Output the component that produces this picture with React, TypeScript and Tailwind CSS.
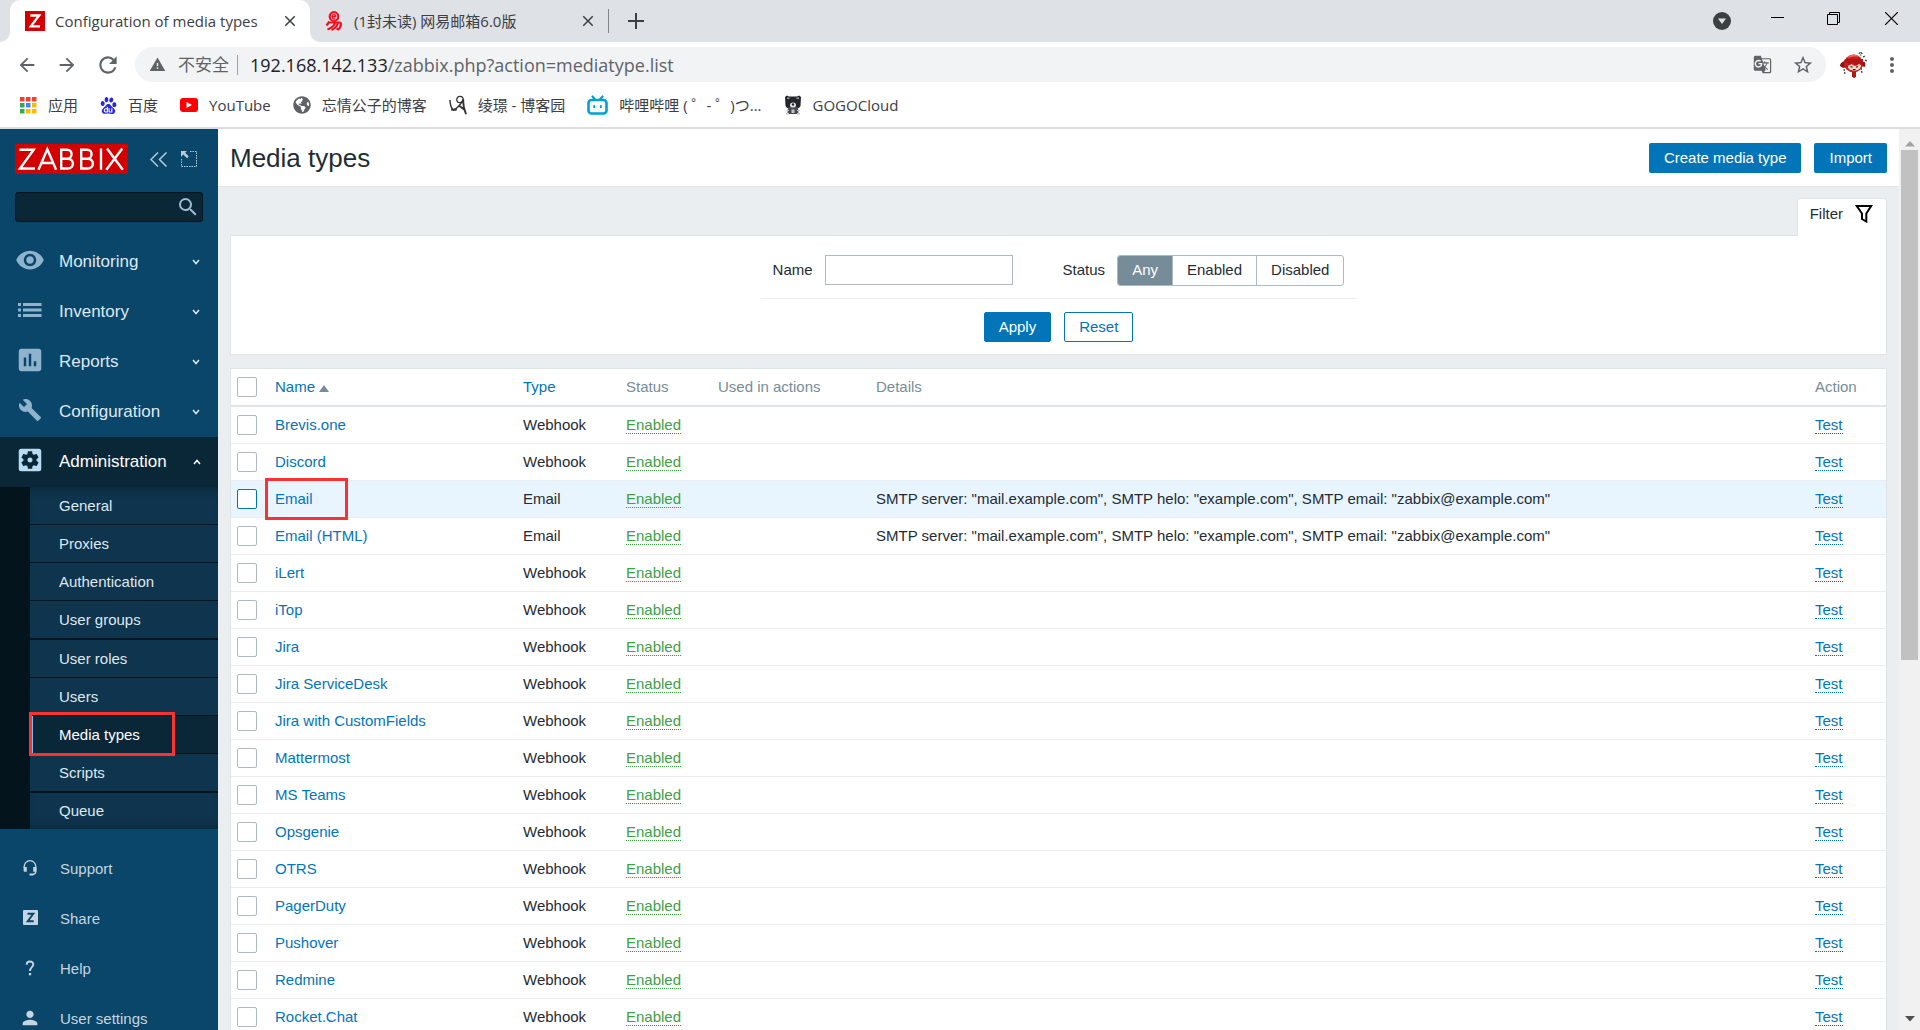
import { useState } from "react";
import type { ReactNode } from "react";
import {
  MdArrowBack,
  MdArrowForward,
  MdAssessment,
  MdBuild,
  MdClose,
  MdGTranslate,
  MdMoreVert,
  MdPerson,
  MdRefresh,
  MdSearch,
  MdSettingsApplications,
  MdStarBorder,
  MdVisibility,
  MdWarning,
} from "react-icons/md";
import { FaGlobeAmericas } from "react-icons/fa";
import { SiBaidu } from "react-icons/si";

const uiFont = "font-['Open_Sans','Noto_Sans_CJK_SC',sans-serif]";
const pageFont = "font-['Liberation_Sans',Arial,sans-serif]";

const smtp =
  'SMTP server: "mail.example.com", SMTP helo: "example.com", SMTP email: "zabbix@example.com"';

const mediaTypes = [
  { name: "Brevis.one", type: "Webhook", details: "" },
  { name: "Discord", type: "Webhook", details: "" },
  { name: "Email", type: "Email", details: smtp, marked: true },
  { name: "Email (HTML)", type: "Email", details: smtp },
  { name: "iLert", type: "Webhook", details: "" },
  { name: "iTop", type: "Webhook", details: "" },
  { name: "Jira", type: "Webhook", details: "" },
  { name: "Jira ServiceDesk", type: "Webhook", details: "" },
  { name: "Jira with CustomFields", type: "Webhook", details: "" },
  { name: "Mattermost", type: "Webhook", details: "" },
  { name: "MS Teams", type: "Webhook", details: "" },
  { name: "Opsgenie", type: "Webhook", details: "" },
  { name: "OTRS", type: "Webhook", details: "" },
  { name: "PagerDuty", type: "Webhook", details: "" },
  { name: "Pushover", type: "Webhook", details: "" },
  { name: "Redmine", type: "Webhook", details: "" },
  { name: "Rocket.Chat", type: "Webhook", details: "" },
];

const menu = [
  { label: "Monitoring", icon: <MdVisibility className="size-[30px]" /> },
  { label: "Inventory", icon: <InventoryIcon /> },
  { label: "Reports", icon: <MdAssessment className="size-[30px]" /> },
  { label: "Configuration", icon: <MdBuild className="size-6" /> },
];

const submenu = [
  "General",
  "Proxies",
  "Authentication",
  "User groups",
  "User roles",
  "Users",
  "Media types",
  "Scripts",
  "Queue",
];

const userMenu = [
  { label: "Support", icon: <HeadsetIcon /> },
  { label: "Share", icon: <ShareIcon /> },
  { label: "Help", icon: <HelpIcon /> },
  { label: "User settings", icon: <MdPerson className="size-[22px]" /> },
];

/* ---------- icons ---------- */

function InventoryIcon() {
  return (
    <svg viewBox="0 0 24 14" className="h-[14px] w-6" fill="currentColor">
      <path d="M0 0h3v3H0zM0 5.500h3v3H0zM0 11h3v3H0zM5 0h18.500v3H5zM5 5.500h18.500v3H5zM5 11h18.500v3H5z" />
    </svg>
  );
}

function HeadsetIcon() {
  return (
    <svg viewBox="0 0 14 16" className="h-4 w-[14px]" fill="none" stroke="currentColor" strokeWidth="1.300">
      <path d="M1.200 8V6.500a5.800 5.800 0 0 1 11.600 0v4.500c0 2-1 3.300-3 3.500" />
      <path d="M.6 7h3.200v4.800H2a1.400 1.400 0 0 1-1.400-1.400zM10.200 7h3.200v4.800h-3.200zM6.500 13.500h3.500v2H6.500z" fill="currentColor" stroke="none" />
    </svg>
  );
}

function ShareIcon() {
  return (
    <svg viewBox="0 0 15 15" className="size-[15px]">
      <rect width="15" height="15" rx="1" fill="currentColor" />
      <path d="M4.500 3.800h5.800L4.700 11.200h6" fill="none" stroke="#0a466a" strokeWidth="1.900" />
    </svg>
  );
}

function HelpIcon() {
  return (
    <svg viewBox="0 0 10 16" className="h-4 w-[10px]" fill="none" stroke="currentColor" strokeWidth="1.900">
      <path d="M1.700 4.800C1.700 0.400 8.300 0.400 8.300 4.600C8.300 7.200 5 7.300 5 11" />
      <path d="M5 13v2.300" strokeWidth="2.300" />
    </svg>
  );
}

function ZabbixFavicon() {
  return (
    <svg viewBox="0 0 20 20" className="size-5 shrink-0">
      <rect width="20" height="20" fill="#d40000" />
      <path d="M5.300 4.500h8.900L5.800 15.300h9.200" fill="none" stroke="#fff" strokeWidth="2.300" />
    </svg>
  );
}

function ZabbixLogo() {
  return (
    <svg viewBox="0 0 113 30" className="h-[30px] w-[113px]" role="img" aria-label="Zabbix">
      <rect width="113" height="30" fill="#d40000" />
      <g fill="none" stroke="#fff" strokeWidth="2.400">
        <path d="M4.500 5.700h14.200L5 24.500h15" />
        <path d="M23.500 25.700L32.300 5.300l8.800 20.400M26.700 19h11.200" />
        <path d="M46.200 5.700v18.800h6.600c6.800 0 6.800-9.800 0-9.800h-6.600h6c5.800 0 5.800-9 0-9z" />
        <path d="M66.200 5.700v18.800h6.600c6.800 0 6.800-9.800 0-9.800h-6.600h6c5.800 0 5.800-9 0-9z" />
        <path d="M86 4.500v21.200" />
        <path d="M92 4.500l15.800 21.200M107.300 4.500L91.300 25.700" />
      </g>
    </svg>
  );
}

function MailFavicon() {
  return (
    <svg viewBox="0 0 18 20" className="h-5 w-[18px] shrink-0" fill="none" stroke="#f0101c" strokeWidth="2.200">
      <circle cx="9" cy="5.500" r="4.300" />
      <path d="M7 5.500h4M11 5.500a2 2 0 1 0-1 1.800" strokeWidth="1.300" />
      <path d="M4.500 10.500L1.500 14.500M3.500 11.500H15c1.500 0 1 5-1.500 7l-2-1M10 12c-1 3-4 5-7.500 6.500M13 12c-1 3-3 5.500-6.500 7" />
    </svg>
  );
}

function AppsIcon() {
  const colors = ["#ea4335", "#ea4335", "#ea4335", "#34a853", "#4285f4", "#fbbc05", "#34a853", "#fbbc05", "#fbbc05"];
  return (
    <svg viewBox="0 0 17 17" className="size-[17px]">
      {colors.map((c, i) => (
        <rect key={i} x={(i % 3) * 6} y={Math.floor(i / 3) * 6} width="4.500" height="4.500" fill={c} />
      ))}
    </svg>
  );
}

function YouTubeIcon() {
  return (
    <svg viewBox="0 0 18 18" className="size-[18px]">
      <rect y="2" width="18" height="14" rx="3" fill="#f00" />
      <path d="M6.500 6v6l5.500-3z" fill="#fff" />
    </svg>
  );
}

function BlogIcon() {
  return (
    <svg viewBox="0 0 18 20" className="h-5 w-[18px]" fill="none" stroke="#333" strokeLinecap="round">
      <circle cx="11" cy="4.500" r="3.200" strokeWidth="1.300" />
      <path d="M1 5.500c.3 4 1.300 8 3.200 9.300c3.300-.8 7-4.800 10-10" strokeWidth="1.500" />
      <path d="M14.300 5c-.3 4.500.6 9 2.500 13.500M10.500 11l4.700 3.500M3 14.800h4" strokeWidth="1.900" />
    </svg>
  );
}

function BilibiliIcon() {
  return (
    <svg viewBox="0 0 21 20" className="h-5 w-[21px]" fill="none" stroke="#00a1d6" strokeWidth="2.600" strokeLinecap="round">
      <rect x="1.500" y="5" width="18" height="13.500" rx="3" />
      <path d="M5.500 1.500L8 4.500M15.500 1.500L13 4.500" strokeWidth="2.200" />
      <path d="M7.200 11v1.300M13.800 11v1.300" strokeWidth="2" />
    </svg>
  );
}

function BearIcon() {
  return (
    <svg viewBox="0 0 18 20" className="h-5 w-[18px]">
      <path d="M1 2l2-1.500 2 1h8l2-1L17 2l-.5 9-1.500 2H3l-1.500-2z" fill="#25252d" />
      <path d="M4 12h10l.5 7h-11z" fill="#4a4a52" />
      <path d="M3 2.500h2.500v1.500H3zM12.500 2.500H15v1.500h-2.500z" fill="#9a9aa2" />
      <ellipse cx="9" cy="10" rx="3" ry="2.500" fill="#e8e8ec" />
      <circle cx="9" cy="9.500" r="1.200" fill="#222" />
      <path d="M2 15h3v1H2zM13 15h3v1h-3zM7.500 14.500h3v3.500h-3zM2 18h3v1.500H2zM13 18h3v1.500h-3z" fill="#c4c4ca" />
    </svg>
  );
}

function AvatarIcon() {
  return (
    <svg viewBox="0 0 28 28" className="size-7">
      <path d="M0 15c0-3 3-5 6-5l1 6-4 1zM22 11c3-1 4 1 3 5l-4-1z" fill="#8d1414" />
      <ellipse cx="13.500" cy="12.500" rx="9.500" ry="9" fill="#c81e1e" />
      <path d="M7 7c3-4 9-5 12-1-4-1-8 0-12 1z" fill="#f26d5d" />
      <path d="M8 15l3-2 4 2 3-2 3 1c0 4-3 5.500-6.500 5.500S8 19 8 15z" fill="#f6d7bd" />
      <path d="M4 10l6 4 3-3 3 4 4-3 3 3V8H5z" fill="#b01818" />
      <path d="M10.500 15.500l2 .800M18 15.500l-2 .8M13 18.500h2.500" stroke="#3a1010" strokeWidth="1.200" />
      <path d="M12 21h4v5l-2 1-2-1z" fill="#b01818" />
      <path d="M4 18l1 5M21 17l1 5M19 3l1.500-2 1.500 1.500-1.500 2M23 6l2-1M25 9l2 1" fill="none" stroke="#333" strokeWidth="1.200" strokeDasharray="2 1" />
    </svg>
  );
}

function FunnelIcon() {
  return (
    <svg viewBox="0 0 18 18" className="size-[18px]" fill="none" stroke="#000" strokeWidth="2">
      <path d="M1.800 1h14.400L11.300 8.500v8L7 14V8.500z" />
    </svg>
  );
}

function Caret({ up = false }: { up?: boolean }) {
  return (
    <svg viewBox="0 0 8 6" className="h-[6px] w-2" fill="none" stroke="currentColor" strokeWidth="1.500">
      <path d={up ? "M1 5l3-3.500L7 5" : "M1 1l3 3.500L7 1"} />
    </svg>
  );
}

/* ---------- browser window ---------- */

function TabStrip() {
  return (
    <div className="flex h-[42px] items-stretch bg-[#dee1e6] text-[15px] text-[#3c4043]">
      <div className="w-[10px] bg-white">
        <div className="h-full rounded-br-[10px] bg-[#dee1e6]" />
      </div>
      <div className="flex w-[300px] items-center rounded-t-[10px] bg-white pl-[15px] pr-[11px]">
        <ZabbixFavicon />
        <span className="ml-[10px] flex-1 whitespace-nowrap">Configuration of media types</span>
        <button aria-label="Close tab">
          <MdClose className="size-[18px]" />
        </button>
      </div>
      <div className="w-[10px] bg-white">
        <div className="h-full rounded-bl-[10px] bg-[#dee1e6]" />
      </div>
      <div className="flex w-[288px] items-center pl-[5px] pr-[11px]">
        <MailFavicon />
        <span className="ml-[11px] flex-1 whitespace-nowrap">(1封未读) 网易邮箱6.0版</span>
        <button aria-label="Close tab">
          <MdClose className="size-[18px]" />
        </button>
      </div>
      <div className="h-6 w-px self-center bg-[#80868b]" />
      <button aria-label="New tab" className="ml-[19px]">
        <svg viewBox="0 0 16 16" className="size-4" stroke="#3c4043" strokeWidth="2">
          <path d="M8 0v16M0 8h16" />
        </svg>
      </button>

      {/* window controls */}
      <div className="ml-auto flex items-start text-black">
        <button aria-label="Search tabs" className="mr-10 mt-3">
          <svg viewBox="0 0 18 18" className="size-[18px]">
            <circle cx="9" cy="9" r="9" fill="#3c4043" />
            <path d="M5 6.500h8L9 12z" fill="#dee1e6" />
          </svg>
        </button>
        <button aria-label="Minimize" className="mr-[43px] mt-3">
          <svg viewBox="0 0 13 13" className="size-[13px]" shapeRendering="crispEdges">
            <path d="M0 5h13v1H0z" />
          </svg>
        </button>
        <button aria-label="Restore" className="mr-[45px] mt-3">
          <svg viewBox="0 0 13 13" className="size-[13px]" fill="none" stroke="#000">
            <path d="M.5 2.500h10v10H.5zM2.500 2.500v-2h10v10h-2" />
          </svg>
        </button>
        <button aria-label="Close" className="mr-[22px] mt-3">
          <svg viewBox="0 0 13 13" className="size-[13px]" stroke="#000" strokeWidth="1.200">
            <path d="M0 0l13 13M13 0L0 13" />
          </svg>
        </button>
      </div>
    </div>
  );
}

function AddressBar() {
  return (
    <div className="flex h-[45px] items-center pl-4 pr-4 text-[#5f6368]">
      <button aria-label="Back">
        <MdArrowBack className="size-[22px]" />
      </button>
      <button aria-label="Forward" className="ml-[18px]">
        <MdArrowForward className="size-[22px]" />
      </button>
      <button aria-label="Reload" className="ml-[17px]">
        <MdRefresh className="size-[26px]" />
      </button>
      <div className="ml-[14px] flex h-[35px] min-w-0 flex-1 items-center rounded-full bg-[#f1f3f4] pl-[14px] pr-3">
        <MdWarning className="size-[17px]" />
        <span className="ml-3 whitespace-nowrap text-[17px]">不安全</span>
        <span className="mx-2 h-5 w-px bg-[#9aa0a6]" />
        <span className="ml-1 flex-1 whitespace-nowrap text-lg leading-6">
          <span className="text-[#202124]">192.168.142.133</span>/zabbix.php?action=mediatype.list
        </span>
        <button aria-label="Translate this page">
          <MdGTranslate className="size-[19px]" />
        </button>
        <button aria-label="Bookmark this page" className="ml-5">
          <MdStarBorder className="size-[22px]" />
        </button>
      </div>
      <button aria-label="Profile" className="ml-[14px]">
        <AvatarIcon />
      </button>
      <button aria-label="Menu" className="ml-3">
        <MdMoreVert className="size-6" />
      </button>
    </div>
  );
}

function Bookmark({ icon, label }: { icon: ReactNode; label: string }) {
  return (
    <a href="#" className="flex shrink-0 items-center gap-[11px] whitespace-nowrap">
      {icon}
      {label}
    </a>
  );
}

function BookmarksBar() {
  return (
    <nav className="flex h-[42px] items-center gap-[22px] border-b-2 border-[#dadce0] pb-1 pl-5 text-[15px] text-[#3c4043]">
      <Bookmark icon={<AppsIcon />} label="应用" />
      <Bookmark icon={<SiBaidu className="size-[17px] text-[#2529d8]" />} label="百度" />
      <Bookmark icon={<YouTubeIcon />} label="YouTube" />
      <Bookmark icon={<FaGlobeAmericas className="size-[18px] text-[#5f6368]" />} label="忘情公子的博客" />
      <Bookmark icon={<BlogIcon />} label="绫璟 - 博客园" />
      <Bookmark icon={<BilibiliIcon />} label="哔哩哔哩 ( ゜- ゜)つ..." />
      <Bookmark icon={<BearIcon />} label="GOGOCloud" />
    </nav>
  );
}

function Scrollbar() {
  return (
    <div className="flex w-[21px] shrink-0 flex-col items-center justify-between bg-[#f1f1f1] py-2">
      <div className="flex h-full flex-col items-center">
        <svg viewBox="0 0 10 6" className="h-[13px] w-[10px] shrink-0" fill="#a3a3a3">
          <path d="M0 6l5-5.500L10 6z" />
        </svg>
        <div className="h-[58%] w-[17px] bg-[#c1c1c1]" />
      </div>
      <svg viewBox="0 0 10 6" className="h-[6px] w-[10px] shrink-0" fill="#505050">
        <path d="M0 0l5 5.500L10 0z" />
      </svg>
    </div>
  );
}

/* ---------- sidebar ---------- */

function Sidebar() {
  return (
    <aside className="flex w-[218px] shrink-0 flex-col overflow-hidden bg-[#0a466a] text-[#dfe8ee]">
      <div className="flex items-center pl-[15px] pt-[15px]">
        <a href="#">
          <ZabbixLogo />
        </a>
        <button aria-label="Collapse sidebar" className="ml-[22px] text-[#b5cbd9]">
          <svg viewBox="0 0 18 15" className="h-[15px] w-[18px]" fill="none" stroke="currentColor" strokeWidth="1.500">
            <path d="M8 .500L1 7.500l7 7M16.500.500l-7 7 7 7" />
          </svg>
        </button>
        <button aria-label="Hide sidebar" className="ml-[13px] text-[#b5cbd9]">
          <svg viewBox="0 0 16 16" className="size-4" fill="none" stroke="currentColor">
            <path d="M9 .500h6.500v15H.500V8" strokeDasharray="1.500 1" />
            <path d="M0 0h6L4.200 1.800l3.600 3.600-1.800 1.800L2.200 3.600 0 6z" fill="currentColor" stroke="none" />
          </svg>
        </button>
      </div>

      <div className="mx-[15px] mt-[18px] flex h-[30px] shrink-0 items-center rounded-[3px] border border-[#04141d] bg-[#0a2738] pr-[2px]">
        <input aria-label="Search" className="min-w-0 flex-1 bg-transparent px-2 text-[15px] outline-none" />
        <button aria-label="Run search" className="text-[#9fbccf]">
          <MdSearch className="size-6" />
        </button>
      </div>

      <nav className="mt-[15px] text-[17px]">
        {menu.map((item) => (
          <a key={item.label} href="#" className="flex h-[50px] items-center pr-[18px]">
            <span className="flex w-[59px] justify-center pb-1 text-[#8fb3cc]">{item.icon}</span>
            <span className="flex-1">{item.label}</span>
            <Caret />
          </a>
        ))}
        <a href="#" className="flex h-[50px] items-center bg-[#0a2738] pr-[17px] text-white">
          <span className="flex w-[59px] justify-center pb-1 text-[#b8dbf2]">
            <MdSettingsApplications className="size-[30px]" />
          </span>
          <span className="flex-1">Administration</span>
          <Caret up />
        </a>

        <ul className="bg-[#04141d] pl-[30px] text-[15px]">
          {submenu.map((label, i) => (
            <li
              key={label}
              className={
                label === "Media types"
                  ? "relative h-[38px] border-b border-l-[3px] border-b-[#04141d] border-l-[#7dbbe8] bg-[#0a2738]"
                  : i === 3 || i === 7
                    ? "h-[39px] border-b-2 border-[#04141d] bg-[#0f344d]"
                    : i === 8
                      ? "h-9 bg-[#0f344d] shadow-[inset_0_-8px_8px_-6px_#0a2738]"
                      : i === 0
                        ? "h-[38px] border-b border-[#04141d] bg-[#0f344d] shadow-[inset_0_8px_8px_-6px_#0a2738]"
                        : "h-[38px] border-b border-[#04141d] bg-[#0f344d]"
              }
            >
              <a
                href="#"
                className={`flex h-full items-center ${label === "Media types" ? "pl-[26px] text-white" : "pl-[29px]"}`}
              >
                {label}
              </a>
              {label === "Media types" && (
                <span className="pointer-events-none absolute -left-1 -top-1 h-11 w-[146px] border-[3px] border-[#fb3232]" />
              )}
            </li>
          ))}
        </ul>
      </nav>

      <nav className="mt-[15px] text-[15px] text-[#c6d5df]">
        {userMenu.map((item) => (
          <a key={item.label} href="#" className="flex h-[50px] items-center">
            <span className="flex w-[60px] justify-center pb-[3px]">{item.icon}</span>
            {item.label}
          </a>
        ))}
      </nav>
    </aside>
  );
}

/* ---------- main content ---------- */

function Filter() {
  const [status, setStatus] = useState("Any");

  return (
    <section className="flex flex-col">
      <div className="relative z-10 -mb-px flex h-[38px] items-center gap-3 self-end rounded-t-[3px] border border-b-0 border-[#dfe4e7] bg-white pb-[7px] pl-3 pr-[13px]">
        <a href="#">Filter</a>
        <FunnelIcon />
      </div>
      <form
        className="flex flex-col items-center border border-[#dfe4e7] bg-white pb-3 pt-[19px]"
        onSubmit={(e) => e.preventDefault()}
      >
        <div className="flex items-start border-b border-[#ebeef0] px-3 pb-3">
          <label htmlFor="filter_name" className="leading-[30px]">
            Name
          </label>
          <input id="filter_name" className="ml-3 h-[30px] w-[188px] border border-[#acbbc2] px-1 outline-none" />
          <span id="filter_status" className="ml-[50px] leading-[30px]">
            Status
          </span>
          <div
            role="radiogroup"
            aria-labelledby="filter_status"
            className="ml-3 flex h-[31px] overflow-hidden rounded-[3px] border border-[#acbbc2]"
          >
            {["Any", "Enabled", "Disabled"].map((option) => (
              <label
                key={option}
                className="flex items-center border-l border-[#acbbc2] px-[14px] pb-px first:border-l-0 has-checked:bg-[#768d99] has-checked:text-white"
              >
                <input
                  type="radio"
                  name="status"
                  className="sr-only"
                  checked={status === option}
                  onChange={() => setStatus(option)}
                />
                {option}
              </label>
            ))}
          </div>
        </div>
        <div className="mt-[13px] flex gap-[13px]">
          <button className="h-[30px] rounded-[2px] border border-[#0275b8] bg-[#0275b8] px-[14px] text-white">Apply</button>
          <button type="reset" className="h-[30px] rounded-[2px] border border-[#0275b8] bg-white px-[14px] text-[#0275b8]">
            Reset
          </button>
        </div>
      </form>
    </section>
  );
}

function Checkbox({ label, active = false }: { label: string; active?: boolean }) {
  return (
    <input
      type="checkbox"
      aria-label={label}
      className={`block size-5 appearance-none rounded-[2px] border bg-white checked:bg-[#0275b8] ${
        active ? "border-[#0275b8]" : "border-[#acbbc2]"
      }`}
    />
  );
}

function MediaTypesTable() {
  return (
    <table className="mt-[13px] w-full table-fixed border-separate border-spacing-0 border border-b-0 border-[#dfe4e7] bg-white text-left">
      <colgroup>
        <col className="w-[38px]" />
        <col className="w-[248px]" />
        <col className="w-[103px]" />
        <col className="w-[92px]" />
        <col className="w-[158px]" />
        <col />
        <col className="w-[77px]" />
      </colgroup>
      <thead>
        <tr className="h-[38px] text-[#768d99] [&>th]:border-b-2 [&>th]:border-[#dfe4e7] [&>th]:px-[6px] [&>th]:font-normal">
          <th>
            <Checkbox label="Select all" />
          </th>
          <th>
            <a href="#" className="inline-flex items-center gap-1 text-[#0275b8]">
              Name
              <svg viewBox="0 0 10 7" className="mt-[3px] h-[7px] w-[10px]" fill="#768d99">
                <path d="M0 7l5-7 5 7z" />
              </svg>
            </a>
          </th>
          <th>
            <a href="#" className="text-[#0275b8]">
              Type
            </a>
          </th>
          <th>Status</th>
          <th>Used in actions</th>
          <th>Details</th>
          <th>Action</th>
        </tr>
      </thead>
      <tbody>
        {mediaTypes.map((row) => (
          <tr
            key={row.name}
            className={`h-[37px] [&>td]:border-b [&>td]:border-[#ebeef0] [&>td]:px-[6px] ${row.marked ? "bg-[#e8f5ff]" : ""}`}
          >
            <td>
              <Checkbox label={row.name} active={row.marked} />
            </td>
            <td className="relative">
              <a href="#" className="text-[#0275b8]">
                {row.name}
              </a>
              {row.marked && (
                <span className="pointer-events-none absolute -left-1 -top-[3px] h-[42px] w-[83px] border-[3px] border-[#fb3232]" />
              )}
            </td>
            <td>{row.type}</td>
            <td>
              <a href="#" className="border-b border-dotted border-[#429e47] text-[#429e47]">
                Enabled
              </a>
            </td>
            <td />
            <td className="whitespace-nowrap">{row.details}</td>
            <td>
              <button className="border-b border-dotted border-[#0275b8] leading-[17px] text-[#0275b8]">Test</button>
            </td>
          </tr>
        ))}
      </tbody>
    </table>
  );
}

export default function App() {
  return (
    <div className={`flex h-screen flex-col overflow-hidden bg-white ${uiFont}`}>
      <header>
        <TabStrip />
        <AddressBar />
        <BookmarksBar />
      </header>

      <div className={`flex min-h-0 flex-1 text-[15px] leading-[18px] text-[#1f2c33] ${pageFont}`}>
        <Sidebar />
        <main className="min-w-0 flex-1 overflow-hidden bg-[#ebeef0]">
          <div className="flex h-[58px] items-center gap-[13px] border-b border-[#dfe4e7] bg-white pl-3 pr-3">
            <h1 className="flex-1 text-[26px] leading-8">Media types</h1>
            <button className="h-[30px] rounded-[2px] bg-[#0275b8] px-[15px] text-white">Create media type</button>
            <button className="h-[30px] rounded-[2px] bg-[#0275b8] px-[15px] text-white">Import</button>
          </div>
          <div className="px-3 pt-[11px]">
            <Filter />
            <MediaTypesTable />
          </div>
        </main>
        <Scrollbar />
      </div>
    </div>
  );
}
